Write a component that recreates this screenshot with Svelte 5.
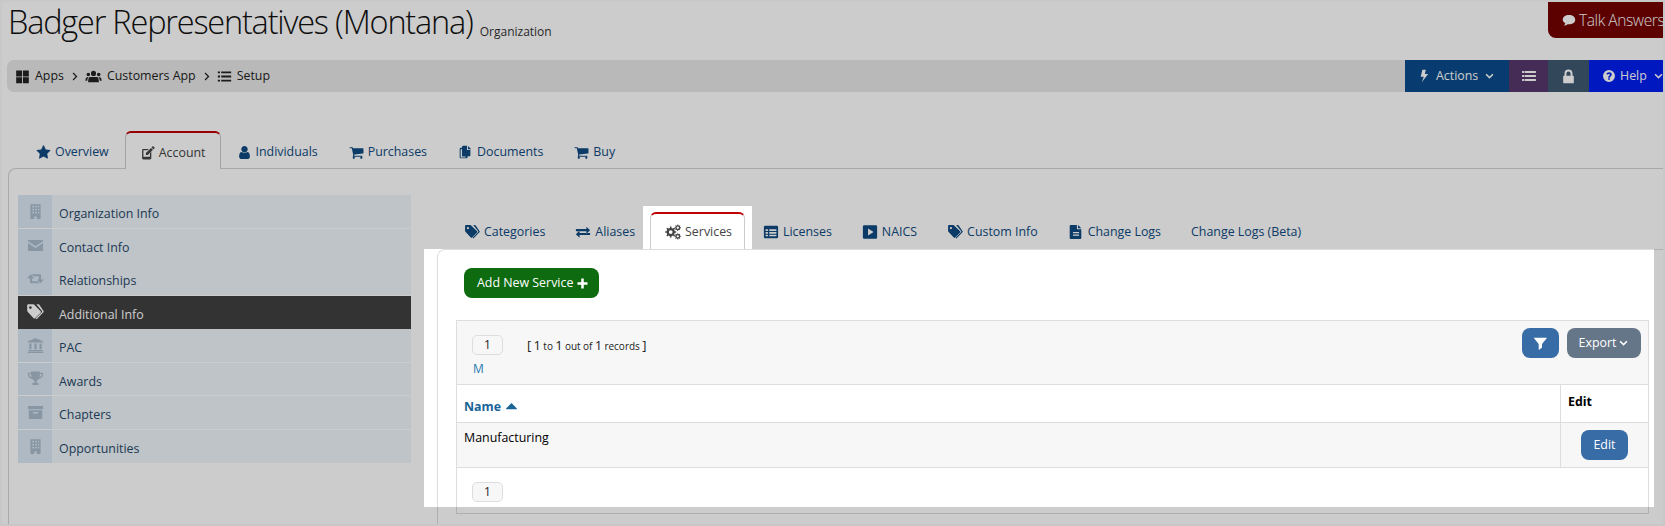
<script>
  function gear(cx, cy, r, hole, teeth) {
    const pts = [];
    const step = (Math.PI * 2) / teeth;
    for (let i = 0; i < teeth; i++) {
      const a = i * step;
      const w = step * 0.25;
      const w2 = step * 0.17;
      const rr = r * 0.76;
      pts.push([a - w, rr], [a - w2, r], [a + w2, r], [a + w, rr]);
    }
    const d = pts
      .map(([a, l], i) => `${i ? 'L' : 'M'}${(cx + Math.cos(a) * l).toFixed(0)} ${(cy + Math.sin(a) * l).toFixed(0)}`)
      .join('');
    return `${d}Z M${cx - hole} ${cy}a${hole} ${hole} 0 1 0 ${hole * 2} 0a${hole} ${hole} 0 1 0 ${-hole * 2} 0Z`;
  }
  const paths = {
    star: 'M1728 647q0 22-26 48l-363 354 86 500q1 7 1 20 0 21-10.5 35.5t-30.5 14.5q-19 0-40-12l-449-236-449 236q-22 12-40 12-21 0-31.5-14.5t-10.5-35.5q0-6 2-20l86-500-364-354q-25-27-25-48 0-37 56-46l502-73 225-455q19-41 49-41t49 41l225 455 502 73q56 9 56 46z',
    user: 'M1536 1399q0 109-62.5 187t-150.5 78h-854q-88 0-150.5-78t-62.5-187q0-85 8.5-160.5t31.5-152 58.5-131 94-89 134.5-34.5q131 128 313 128t313-128q76 0 134.5 34.5t94 89 58.5 131 31.5 152 8.5 160.5zm-256-887q0 159-112.5 271.5t-271.5 112.5-271.5-112.5-112.5-271.5 112.5-271.5 271.5-112.5 271.5 112.5 112.5 271.5z',
    cart: 'M704 1536q0 52-38 90t-90 38-90-38-38-90 38-90 90-38 90 38 38 90zm896 0q0 52-38 90t-90 38-90-38-38-90 38-90 90-38 90 38 38 90zm128-1088v512q0 24-16.5 42.5t-40.5 21.5l-1044 122q13 60 13 70 0 16-24 64h920q26 0 45 19t19 45-19 45-45 19h-1024q-26 0-45-19t-19-45q0-11 8-31.5t16-36 21.5-40 15.5-29.5l-177-823h-204q-26 0-45-19t-19-45 19-45 45-19h256q16 0 28.5 6.5t19.5 15.5 13 24.5 8 26 5.5 29.5 4.5 26h1201q26 0 45 19t19 45z',
    edit: 'M250 1450V500q0-60 45-105t105-45h650l-160 160H410v780h780V860l160-160v750q0 60-45 105t-105 45H400q-60 0-105-45t-45-105zM700 850l620-620 230 230-620 620H700zM1380 170l100-100q30-30 70-30t70 30l90 90q30 30 30 70t-30 70l-100 100z',
    docs: 'M1100 100h-500q-50 0-85 35t-35 85v120h-160q-50 0-85 35t-35 85v1000q0 50 35 85t85 35h700q50 0 85-35t35-85v-120h220q50 0 85-35t35-85V600h-400V100zM1200 120v380h380zM480 520v740q0 50 35 85t85 35h300v120H320V520z',
    grid: 'M140 190h700v700H140zM950 190h700v700H950zM140 1000h700v700H140zM950 1000h700v700H950z',
    users: 'M896 300a270 270 0 1 1 0 540a270 270 0 0 1 0-540zM350 500a190 190 0 1 1 0 380a190 190 0 0 1 0-380zM1442 500a190 190 0 1 1 0 380a190 190 0 0 1 0-380zM500 950h792q170 60 170 560H330q0-500 170-560zM40 1280q0-270 230-330h90q-100 120-130 400H90q-50 0-50-70zM1752 1280q0-270-230-330h-90q100 120 130 400h140q50 0 50-70z',
    list: 'M100 300h260v220H100zM500 300h1190v220H500zM100 790h260v220H100zM500 790h1190v220H500zM100 1280h260v220H100zM500 1280h1190v220H500z',
    bars: 'M120 340h220v230H120zM400 340h1270v230H400zM120 780h220v230H120zM400 780h1270v230H400zM120 1220h220v230H120zM400 1220h1270v230H400z',
    angle: 'M250 620l180-180 466 466 466-466 180 180-646 646z',
    right: 'M520 300l180-180 780 776-780 776-180-180 596-596z',
    bolt: 'M1000 100H560L340 1000h400L480 1700l820-1060H880z',
    lock: 'M420 800V540a476 476 0 0 1 952 0v260h90q70 0 70 70v760q0 70-70 70H330q-70 0-70-70V870q0-70 70-70zm230 0h492V540a246 246 0 0 0-492 0z',
    help: 'M896 130a766 766 0 1 1 0 1532a766 766 0 0 1 0-1532zM790 1190v190h220v-190zM896 420q-250 0-340 200l160 120q50-110 170-110 130 0 130 90 0 70-110 130-110 60-110 220v50h210q0-80 70-120 170-100 170-290 0-290-350-290z',
    comment: 'M896 260c460 0 800 250 800 590s-340 590-800 590c-60 0-120-4-170-12-120 110-280 150-470 170 70-80 150-180 170-290C210 1200 96 1040 96 850c0-340 340-590 800-590z',
    building: 'M360 120h1072v1560H1030v-270H760v270H360zM560 300v180h180V300zM860 300v180h180V300zM1160 300v180h120V300zM560 610v180h180V610zM860 610v180h180V610zM1160 610v180h120V610zM560 920v180h180V920zM860 920v180h180V920zM1160 920v180h120V920z',
    mail: 'M100 420q0-110 110-110h1372q110 0 110 110v40L896 980 100 460zM100 640l796 510 796-510v720q0 110-110 110H210q-110 0-110-110z',
    retweet: 'M380 460l380 400H540v330h560l200 200H420q-110 0-110-110V860H0zM1412 1390l-380-400h220V660H692L492 460h880q110 0 110 110v420h310z',
    tag: 'M120 220q0-100 100-100h480q60 0 100 40l660 660q70 70 0 140L900 1520q-70 70-140 0L160 860q-40-40-40-100zM440 330a130 130 0 1 0 0 260a130 130 0 0 0 0-260zM1030 120h180q60 0 100 40l420 620q70 70 0 140l-620 640q-70 70-140 0l-20-20 620-620q70-70 0-140z',
    bank: 'M896 120l800 340v130H96V460zM240 680h230v620H240zM780 680h230v620H780zM1320 680h230v620h-230zM160 1380h1470v120H160zM70 1560h1650v130H70z',
    trophy: 'M430 150h930v130h330v210c0 230-200 410-440 430-70 110-160 180-240 210v250h210v190H570v-190h210V1130c-80-30-170-100-240-210C300 900 100 720 100 490V280h330zM240 420v70c0 120 110 230 230 270-30-100-40-220-40-340zM1550 420h-190c0 120-10 240-40 340 120-40 230-150 230-270z',
    archive: 'M100 220h1592v340H100zM190 660h1412v920H190zM640 850v150h512V850z',
    exchange: 'M100 560h1180V300l410 400-410 400V800H100zM1692 1000H510V740L100 1140l410 400v-300h1182z',
    gears: `${gear(640, 900, 620, 210, 8)} ${gear(1430, 420, 360, 130, 8)} ${gear(1430, 1380, 360, 130, 8)}`,
    table: 'M240 200h1312q140 0 140 140v1110q0 140-140 140H240q-140 0-140-140V340q0-140 140-140zM290 600v180h260V600zM700 600v180h800V600zM290 900v180h260V900zM700 900v180h800V900zM290 1200v180h260v-180zM700 1200v180h800v-180z',
    play: 'M240 130h1312q140 0 140 140v1250q0 140-140 140H240q-140 0-140-140V270q0-140 140-140zM680 500v790l620-395z',
    file: 'M300 100h700v500h490v980q0 110-110 110H300q-110 0-110-110V210q0-110 110-110zM1120 100l370 380h-370zM560 900v130h680V900zM560 1180v130h680v-130z',
    plus: 'M720 200h350v520h520v350h-520v520H720v-520H200V720h520z',
    caret: 'M896 480l640 640q40 60-30 90H286q-70-30-30-90z',
    filter: 'M120 200q-40 0-20 50l580 720v640q10 40 50 20l320-220q30-20 30-60V970l580-720q20-50-20-50z'
  };
  const mainTabs = [
    ['Overview', 'star'], ['Account', 'edit', true], ['Individuals', 'user'],
    ['Purchases', 'cart'], ['Documents', 'docs'], ['Buy', 'cart']
  ];
  const nav = [
    ['Organization Info', 'building'], ['Contact Info', 'mail'], ['Relationships', 'retweet'],
    ['Additional Info', 'tag', true], ['PAC', 'bank'], ['Awards', 'trophy'],
    ['Chapters', 'archive'], ['Opportunities', 'building']
  ];
  const subTabs = [
    ['Categories', 'tag'], ['Aliases', 'exchange'], ['Services', 'gears', true], ['Licenses', 'table'],
    ['NAICS', 'play'], ['Custom Info', 'tag'], ['Change Logs', 'file'], ['Change Logs (Beta)', null]
  ];
</script>

{#snippet icon(name, cls = '')}
  <svg class="ic {cls}" viewBox="0 0 1792 1792" aria-hidden="true"><path fill-rule="evenodd" d={paths[name]} /></svg>
{/snippet}

<div class="page">
  <header class="top">
    <div class="title"><h1>Badger Representatives (Montana)</h1><small>Organization</small></div>
    <button class="talk">{@render icon('comment')}Talk Answers</button>
  </header>

  <div class="bar">
    <nav class="crumbs">
      <span class="crumb">{@render icon('grid')}Apps</span>
      {@render icon('right', 'sep')}
      <span class="crumb">{@render icon('users', 'wide')}Customers App</span>
      {@render icon('right', 'sep')}
      <span class="crumb">{@render icon('list')}Setup</span>
    </nav>
    <div class="actions">
      <span class="act a1">{@render icon('bolt')}Actions{@render icon('angle', 'chev')}</span>
      <span class="act a2">{@render icon('bars')}</span>
      <span class="act a3">{@render icon('lock')}</span>
      <span class="act a4">{@render icon('help')}Help{@render icon('angle', 'chev')}</span>
    </div>
  </div>

  <ul class="tabs main">
    {#each mainTabs as [label, ic, active]}
      <li class:active>{@render icon(ic)}{label}</li>
    {/each}
  </ul>

  <section class="panel">
    <ul class="side">
      {#each nav as [label, ic, active]}
        <li class:active><span class="sideic">{@render icon(ic)}</span><span class="sidelabel">{label}</span></li>
      {/each}
    </ul>

    <div class="content">
      <ul class="tabs sub">
        {#each subTabs as [label, ic, active]}
          <li class:active>{#if ic}{@render icon(ic)}{/if}{label}</li>
        {/each}
      </ul>
      <div class="box">
        <button class="add">Add New Service{@render icon('plus')}</button>
        <div class="grid">
          <div class="toolbar">
            <div class="pagerwrap">
              <div class="pagerline">
                <span class="pg">1</span>
                <span class="recs"><b>[</b> <b>1</b> to <b>1</b> out of <b>1</b> records <b>]</b></span>
              </div>
              <a class="m" href="#m">M</a>
            </div>
            <div class="tools">
              <button class="btn blue filter">{@render icon('filter')}</button>
              <button class="btn slate">Export{@render icon('angle', 'chev')}</button>
            </div>
          </div>
          <div class="row head">
            <div class="c1"><a href="#n">Name</a>{@render icon('caret')}</div>
            <div class="c2">Edit</div>
          </div>
          <div class="row data">
            <div class="c1">Manufacturing</div>
            <div class="c2"><button class="btn blue edit">Edit</button></div>
          </div>
          <div class="foot"><span class="pg">1</span></div>
        </div>
      </div>
    </div>
  </section>

  <div class="dim"></div>
</div>

<style>
  :global(html), :global(body) { margin: 0; overflow: hidden; background: #fff; }
  .page {
    position: relative; box-sizing: border-box; width: 1665px; height: 526px; overflow: hidden;
    border: 2px solid #c8c8c8; background: #fff; color: #222;
    font: 12.4px/18px "Open Sans", sans-serif;
  }
  .ic { width: 14px; height: 14px; fill: currentColor; flex: none; }
  button { font: inherit; border: 0; cursor: pointer; }
  ul { list-style: none; margin: 0; padding: 0; }
  a { text-decoration: none; color: inherit; }

  .top { display: flex; justify-content: space-between; align-items: flex-start; height: 58px; }
  .title { display: flex; align-items: flex-start; padding: 0 0 0 6px; gap: 7px; }
  h1 { margin: 0; font-size: 32.5px; line-height: 40px; font-weight: 300; letter-spacing: -1.2px; color: #111; }
  small { font-size: 12px; line-height: 18px; margin-top: 21px; color: #333; }
  .talk {
    width: 115px; height: 36px; padding: 0 0 0 14px; display: flex; align-items: center; gap: 3px; white-space: nowrap;
    background: #730000; color: #fff; font-size: 15.5px; font-weight: 300; letter-spacing: -0.4px; border-radius: 0 0 0 8px; overflow: hidden;
  }

  .bar { display: flex; height: 32px; margin-left: 5px; }
  .crumbs {
    flex: 1; display: flex; align-items: center; padding-left: 8px; gap: 6px; background: #e8e8e8;
    border-radius: 7px 0 0 7px; color: #222;
  }
  .crumb { display: flex; align-items: center; gap: 5px; }
  .crumbs .ic { width: 15px; height: 15px; }
  .crumbs .wide { width: 17px; height: 17px; }
  .crumbs .sep { width: 9px; height: 9px; }
  .actions { display: flex; color: #fff; }
  .act { display: flex; align-items: center; gap: 4px; height: 32px; box-sizing: border-box; }
  .act .chev { width: 11px; height: 11px; margin-left: 2px; }
  .a1 { width: 104px; background: #0a4c8c; padding-left: 13px; }
  .a2 { width: 39px; background: #56376d; justify-content: center; }
  .a2 .ic { width: 16px; height: 16px; }
  .a3 { width: 41px; background: #405972; justify-content: center; }
  .a3 .ic { width: 15px; height: 15px; }
  .a4 { width: 74px; background: #001ef0; padding-left: 13px; }

  .tabs { display: flex; align-items: flex-end; color: #0e4a80; }
  .tabs li { display: flex; align-items: center; gap: 4px; box-sizing: border-box; white-space: nowrap; }
  .main { height: 37px; margin-top: 39px; padding-left: 19px; gap: 1px; }
  .main li { height: 37px; padding: 5px 15px 0; }
  .main .ic { width: 15px; height: 15px; }
  .main li.active, .sub li.active {
    color: #444; background: #fff; border: 1px solid #ccc; border-top: 2px solid #c00000; border-bottom: 0;
    border-radius: 6px 6px 0 0; margin-bottom: -1px; position: relative;
  }
  .main li.active { height: 38px; padding: 4px 14px 0; }

  .panel {
    display: flex; align-items: flex-start; height: 400px; margin-left: 6px; padding: 26px 0 0 9px; box-sizing: border-box;
    border: 1px solid #d4d4d4; border-right: 0; border-radius: 8px 0 0 0; margin-right: -10px;
  }
  .side { width: 393px; flex: none; }
  .side li { display: flex; height: 33.5px; box-sizing: border-box; background: #eff5fa; color: #27496a; border-bottom: 1px solid #fff; }
  .side li:nth-child(2) { border-bottom: 0; }
  .side li:last-child { border-bottom: 0; }
  .sideic { width: 34px; display: flex; align-items: center; justify-content: center; background: #dae8f5; color: #a9bccb; }
  .sideic .ic { width: 17px; height: 17px; }
  .sidelabel { padding: 0 0 0 7px; line-height: 37px; }
  .side li.active { background: #404040; color: #fff; border-bottom: 0; }
  .side li.active .sideic { background: #404040; color: #fff; }
  .side li.active .ic { width: 18px; height: 18px; }

  .content { flex: 1; margin: 18px 0 0 26px; min-width: 0; }
  .sub { height: 36px; padding-left: 12px; gap: 0; position: relative; }
  .sub li { height: 36px; padding: 1px 15px 0; }
  .sub li.active { height: 37px; padding: 1px 12px 0 14px; margin: 0 3px 0 0; }
  .sub .ic { width: 16px; height: 16px; }
  .box { border: 1px solid #ddd; border-right: 0; border-bottom: 0; border-radius: 8px 0 0 0; padding: 18px 0 0 18px; height: 280px; background: #fff; }
  .add {
    display: flex; align-items: center; gap: 3px; height: 30px; width: 135px; padding: 0 0 0 13px; margin-left: 8px; border-radius: 8px;
    background: #0f6b0f; color: #fff;
  }
  .add .ic { width: 13px; height: 13px; }

  .grid { width: 1193px; margin-top: 22px; box-sizing: border-box; border: 1px solid #ddd; color: #000; }
  .toolbar { display: flex; justify-content: space-between; height: 63px; background: #f7f7f7; border-bottom: 1px solid #ddd; }
  .pagerwrap { padding: 14px 0 0 15px; }
  .pagerline { display: flex; align-items: center; gap: 24px; }
  .pg {
    display: flex; align-items: center; justify-content: center; box-sizing: border-box; width: 31px; height: 20px;
    background: #f7f7f7; border: 1px solid #ddd; border-radius: 5px; font-size: 12px; color: #222;
  }
  .recs { font-size: 10px; color: #222; word-spacing: -0.3px; }
  .recs b { font-weight: 400; font-size: 13px; }
  .m { display: block; margin: 5px 0 0 1px; color: #2a7ab0; font-size: 12px; }
  .tools { display: flex; gap: 8px; padding: 7px 7px 0 0; }
  .btn { height: 30px; border-radius: 8px; color: #fff; display: flex; align-items: center; justify-content: center; }
  .blue { background: #386ca6; }
  .slate { background: #667689; width: 74px; gap: 2px; }
  .slate .chev { width: 11px; height: 11px; }
  .filter { width: 37px; }
  .filter .ic { width: 15px; height: 15px; }

  .row { display: flex; border-bottom: 1px solid #ddd; }
  .c1 { flex: 1; padding-left: 7px; }
  .c2 { width: 88px; border-left: 1px solid #ddd; box-sizing: border-box; padding-left: 7px; }
  .head { height: 37px; font-weight: 700; }
  .head .c1 { display: flex; align-items: flex-end; gap: 3px; padding-bottom: 6px; color: #1a6496; box-sizing: border-box; }
  .head .c1 .ic { width: 15px; height: 15px; margin-bottom: 2px; }
  .head .c2 { padding-top: 8px; }
  .data { height: 44px; background: #f7f7f7; }
  .data .c1 { padding-top: 6px; }
  .edit { width: 47px; margin: 7px 0 0 13px; }
  .foot { height: 45px; padding: 14px 0 0 15px; box-sizing: border-box; }

  .dim {
    position: absolute; left: -2px; top: -2px; width: 1665px; height: 526px; background: rgba(0, 0, 0, 0.2); pointer-events: none;
    clip-path: polygon(evenodd, 0 0, 1665px 0, 1665px 526px, 0 526px, 0 0, 424px 249px, 643px 249px, 643px 206px, 752px 206px, 752px 249px, 1654px 249px, 1654px 507px, 424px 507px, 424px 249px, 0 0);
  }
</style>
